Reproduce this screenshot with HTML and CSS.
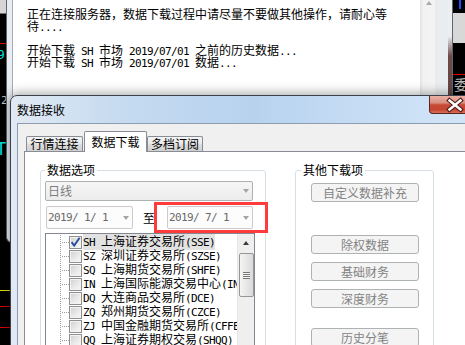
FILE: index.html
```html
<!DOCTYPE html>
<html lang="zh-CN">
<head>
<meta charset="utf-8">
<title>数据接收</title>
<link rel="stylesheet" href="styles.css">
</head>
<body>
<div class="desk">
  <div class="mk cl-box"></div>
  <div class="mk cl-red"></div>
  <div class="mk cl-9">9</div>
  <div class="mk cl-2">2</div>
  <div class="mk cl-t">T</div>
  <div class="mk cl-yel"></div>
  <div class="mk cl-red2"></div>
  <div class="mk cl-red3"></div>
  <div class="mk cr-blue"></div>
  <div class="mk cr-box"></div>
  <div class="mk cr-red"></div>
  <div class="mk cr-wei">委</div>

  <div class="logwin">
    <div class="log-client">
      <div class="log-text">
        <div class="ln">正在连接服务器，数据下载过程中请尽量不要做其他操作，请耐心等</div>
        <div class="ln">待<span class="m">....</span></div>
        <div class="ln"></div>
        <div class="ln">开始下载<span class="m"> SH </span>市场<span class="m"> 2019/07/01 </span>之前的历史数据<span class="m">...</span></div>
        <div class="ln">开始下载<span class="m"> SH </span>市场<span class="m"> 2019/07/01 </span>数据<span class="m">...</span></div>
      </div>
      <div class="vscroll log-scroll">
        <div class="sb-btn"><span class="tri-up light"></span></div>
      </div>
    </div>
  </div>

  <div class="dlg">
    <div class="dlg-title">
      <span class="dlg-caption">数据接收</span>
      <div class="dlg-close">
        <svg width="46" height="16" viewBox="0 0 46 16">
          <path d="M19.5 3.5 L30.5 12.5 M30.5 3.5 L19.5 12.5" stroke="#4a1c18" stroke-width="4.6" stroke-linecap="square" fill="none"/>
          <path d="M19.5 3.5 L30.5 12.5 M30.5 3.5 L19.5 12.5" stroke="#ffffff" stroke-width="2.4" stroke-linecap="square" fill="none"/>
        </svg>
      </div>
    </div>
    <div class="dlg-client">
      <div class="tabs">
        <div class="tab t1">行情连接</div>
        <div class="tab t2 active">数据下载</div>
        <div class="tab t3">多档订阅</div>
      </div>
      <div class="tabpanel">
        <fieldset class="grp grp-data">
          <legend>数据选项</legend>
          <div class="combo disabled"><span>日线</span><span class="arrow"></span></div>
          <div class="daterow">
            <div class="combo date"><span class="m">2019/ 1/ 1</span><span class="arrow"></span></div>
            <span class="to">至</span>
            <div class="combo date date2"><span class="m">2019/ 7/ 1</span><span class="arrow"></span></div>
          </div>
          <div class="tree">
            <div class="tree-items">
              <div class="node"><span class="chk"><svg width="11" height="11" viewBox="0 0 11 11"><path d="M1.6 5.2 L4.2 8.6 L9.6 0.8" fill="none" stroke="#2a4d9e" stroke-width="1.9"/></svg></span><span class="lbl sel"><span class="m">SH </span>上海证券交易所<span class="m">(SSE)</span></span></div>
              <div class="node"><span class="chk"></span><span class="lbl"><span class="m">SZ </span>深圳证券交易所<span class="m">(SZSE)</span></span></div>
              <div class="node"><span class="chk"></span><span class="lbl"><span class="m">SQ </span>上海期货交易所<span class="m">(SHFE)</span></span></div>
              <div class="node"><span class="chk"></span><span class="lbl"><span class="m">IN </span>上海国际能源交易中心<span class="m">(INE)</span></span></div>
              <div class="node"><span class="chk"></span><span class="lbl"><span class="m">DQ </span>大连商品交易所<span class="m">(DCE)</span></span></div>
              <div class="node"><span class="chk"></span><span class="lbl"><span class="m">ZQ </span>郑州期货交易所<span class="m">(CZCE)</span></span></div>
              <div class="node"><span class="chk"></span><span class="lbl"><span class="m">ZJ </span>中国金融期货交易所<span class="m">(CFFEX)</span></span></div>
              <div class="node"><span class="chk"></span><span class="lbl"><span class="m">QQ </span>上海证券期权交易<span class="m">(SHQQ)</span></span></div>
            </div>
            <div class="vscroll tree-scroll">
              <div class="sb-btn"><span class="tri-up"></span></div>
              <div class="thumb"><span class="grip"></span></div>
            </div>
          </div>
        </fieldset>
        <fieldset class="grp grp-other">
          <legend>其他下载项</legend>
          <div class="btns">
            <button class="btn b1" disabled>自定义数据补充</button>
            <button class="btn b2" disabled>除权数据</button>
            <button class="btn b3" disabled>基础财务</button>
            <button class="btn b3" disabled>深度财务</button>
            <button class="btn b5" disabled>历史分笔</button>
          </div>
        </fieldset>
      </div>
    </div>
  </div>

  <div class="callout"></div>
</div>
</body>
</html>
```

FILE: styles.css
```css
* { box-sizing: border-box; }
html, body { margin: 0; padding: 0; }
body {
  width: 465px;
  height: 345px;
  overflow: hidden;
  background: #000;
  font-family: "Noto Sans CJK SC", "Noto Sans", sans-serif;
  font-size: 12px;
  color: #000;
}
.desk {
  position: relative;
  width: 465px;
  height: 345px;
  overflow: hidden;
  background: #000;
}
.m {
  font-family: "DejaVu Sans Mono", monospace;
  font-size: 11px;
  letter-spacing: -0.62px;
}

/* chart marks on the dark background */
.mk { position: absolute; }
.cl-box { left: 0; top: 0; width: 6px; height: 14px; background: #d6d6d6; border-bottom: 1px solid #707070; }
.cl-red { left: 0; top: 43px; width: 6px; height: 1px; background: #e00000; }
.cl-9 { left: -3px; top: 48px; color: #00dede; font: 13px/14px "DejaVu Sans Mono", monospace; }
.cl-2 { left: 1px; top: 95px; color: #c8c8c8; font: 11px/12px "DejaVu Sans Mono", monospace; }
.cl-t { left: -4px; top: 140px; color: #00dede; font: 17px/18px "DejaVu Sans Mono", monospace; }
.cl-yel { left: 0; top: 290px; width: 10px; height: 1px; background: #e6e600; }
.cl-red2 { left: 0; top: 306px; width: 10px; height: 1px; background: #e00000; }
.cl-red3 { left: 0; top: 327px; width: 10px; height: 1px; background: #e00000; }
.cr-blue { left: 459px; top: 0; width: 2px; height: 9px; background: #2a48ff; }
.cr-box { left: 453px; top: 13px; width: 12px; height: 30px; background: #d8d8d8; }
.cr-red { left: 453px; top: 74px; width: 12px; height: 1px; background: #e00000; }
.cr-wei { left: 454px; top: 77px; color: #bdbdbd; font-size: 14px; line-height: 14px; }

/* log window behind */
.logwin {
  position: absolute;
  left: 6px;
  top: -6px;
  width: 447px;
  height: 249px;
  border: 1px solid #5f6670;
  border-top: none;
  border-radius: 0 0 6px 6px;
  background:
    linear-gradient(#eceff2 0, #eceff2 42px, #6d4a48 62px, #3a3030 100%) right top / 4px 100% no-repeat,
    #e9edf1;
  padding: 0 15px 6px 5px;
  display: flex;
}
.log-client {
  flex: 1;
  display: flex;
  background: #fff;
  border-left: 1px solid #a5adb6;
}
.log-text {
  flex: 1;
  padding: 14px 0 0 14px;
  line-height: 12px;
  overflow: hidden;
}
.ln { height: 12px; white-space: pre; }
.vscroll {
  width: 17px;
  display: flex;
  flex-direction: column;
  align-items: center;
}
.log-scroll {
  background: linear-gradient(to right, #e2e2e2 0, #f2f2f2 3px, #f4f4f4 14px, #e8e8e8 100%);
}
.sb-btn {
  width: 100%;
  height: 17px;
  flex: none;
  display: flex;
  align-items: center;
  justify-content: center;
}
.tri-up {
  width: 1px;
  height: 0;
  border-left: 3px solid transparent;
  border-right: 3px solid transparent;
  border-bottom: 4px solid #3c3c3c;
}
.tri-up.light { border-bottom-color: #a9a9a9; }

/* dialog */
.dlg {
  position: absolute;
  left: 10px;
  top: 95px;
  width: 480px;
  height: 270px;
  border: 1px solid #3a414b;
  border-radius: 7px 7px 0 0;
  background: linear-gradient(to right, #e1eaf4 0, #c6dbf0 22%, #b8d2ee 50%, #c9dff5 80%, #d5e7f8 100%);
  box-shadow: 0 0 11px 2px rgba(0, 0, 0, 0.33);
  display: flex;
  flex-direction: column;
  padding-left: 6px;
}
.dlg-title {
  flex: none;
  height: 27px;
  display: flex;
  align-items: center;
}
.dlg-caption { line-height: 12px; }
.dlg-close {
  margin-left: auto;
  margin-right: 12px;
  align-self: flex-start;
  width: 48px;
  height: 18px;
  border: 1px solid #5a2420;
  border-top: none;
  border-radius: 0 0 4px 4px;
  background: linear-gradient(#e9b0a5 0, #d98f80 40%, #c84a38 52%, #c5452f 80%, #d9705a 100%);
  display: flex;
  align-items: center;
}
.dlg-client {
  flex: 1;
  min-height: 0;
  overflow: hidden;
  background: #f0f0f0;
  border-top: 1px solid #8d9cae;
  border-left: 1px solid #8d9cae;
  padding: 7px 0 0 6px;
  display: flex;
  flex-direction: column;
}
.tabs {
  flex: none;
  display: flex;
  align-items: flex-end;
  height: 21px;
  padding-left: 2px;
  position: relative;
  z-index: 1;
  margin-bottom: -1px;
}
.tab {
  height: 15px;
  margin-bottom: 1px;
  border: 1px solid #898c95;
  border-bottom: none;
  border-radius: 2px 2px 0 0;
  background: linear-gradient(#f3f3f3 0, #ebebeb 45%, #dedede 52%, #d0d0d0 100%);
  line-height: 14px;
  text-align: center;
  white-space: nowrap;
}
.t1 { width: 57px; margin-right: 1px; }
.t2 { width: 63px; }
.t3 { width: 56px; }
.tab.active {
  height: 21px;
  margin-bottom: 0;
  background: #fff;
  line-height: 19px;
}
.tabpanel {
  flex: 1;
  min-height: 0;
  background: #fff;
  border-top: 1px solid #898c95;
  border-left: 1px solid #898c95;
  display: flex;
  align-items: flex-start;
  padding: 12px 0 0 15px;
}

/* group boxes */
.grp {
  flex: none;
  margin: 0;
  border: 1px solid #d5dfe5;
  border-radius: 3px;
  min-width: 0;
  height: 240px;
}
.grp legend {
  padding: 0 2px;
  margin: 0;
  font-size: 12px;
  line-height: 12px;
}
.grp-data { width: 226px; padding: 5px 0 0 4px; }
.grp-other { width: 139px; margin-left: 29px; padding: 0 0 0 5px; }

.combo {
  flex: none;
  display: flex;
  align-items: center;
  justify-content: space-between;
  height: 20px;
  border: 1px solid #adb2b5;
  border-radius: 2px;
  padding: 0 3px 0 2px;
  line-height: 12px;
}
.combo.disabled {
  width: 208px;
  background: linear-gradient(#f6f6f6, #ececec);
  color: #7e7e7e;
}
.arrow {
  width: 1px;
  height: 0;
  border-left: 3px solid transparent;
  border-right: 3px solid transparent;
  border-top: 4px solid #a4a4a4;
}
.daterow {
  display: flex;
  align-items: center;
  margin-top: 5px;
  height: 23px;
}
.combo.date {
  width: 87px;
  height: 23px;
  margin-left: 1px;
  padding: 0 3px 0 1px;
  background: #fcfcfc;
  border-color: #cacaca;
  color: #6a6a6a;
}
.to { flex: none; margin-left: 10px; width: 12px; line-height: 12px; }
.combo.date2 { width: 86px; margin-left: 12px; }

/* tree list */
.tree {
  margin-top: 4px;
  width: 210px;
  height: 150px;
  border: 1px solid #828790;
  display: flex;
  background: #fff;
}
.tree-items {
  flex: 1;
  min-width: 0;
  overflow: hidden;
  padding-top: 1px;
}
.node {
  height: 14px;
  display: flex;
  align-items: center;
  padding-left: 23px;
  white-space: nowrap;
  line-height: 14px;
  background:
    repeating-linear-gradient(to bottom, #9a9a9a 0 1px, transparent 1px 2px) 14px 0 / 1px 100% no-repeat,
    repeating-linear-gradient(to right, #9a9a9a 0 1px, transparent 1px 2px) 16px 7px / 8px 1px no-repeat;
}
.chk {
  flex: none;
  width: 13px;
  height: 13px;
  border: 1px solid #8f8f8f;
  background: linear-gradient(135deg, #cfcfcf 0, #e9e9e9 55%, #f7f7f7 100%);
  box-shadow: inset 0 0 0 1px #f3f3f3;
  display: flex;
  align-items: center;
  justify-content: center;
}
.lbl { flex: none; margin-left: 1px; }
.lbl.sel { background: #e2e2e2; }
.tree-scroll {
  flex: none;
  background: #efefef;
  border-left: 1px solid #e4e4e4;
}
.thumb {
  flex: none;
  margin-top: 2px;
  width: 15px;
  height: 44px;
  border: 1px solid #979797;
  border-radius: 2px;
  background: linear-gradient(to right, #f5f5f5, #e7e7e7 50%, #d9d9d9);
  display: flex;
  align-items: center;
  justify-content: center;
}
.grip {
  width: 7px;
  height: 7px;
  background: repeating-linear-gradient(to bottom, #777 0 1px, #f4f4f4 1px 2px);
}

/* buttons */
.btns {
  display: flex;
  flex-direction: column;
  padding-left: 10px;
}
.btn {
  flex: none;
  width: 108px;
  height: 19px;
  padding: 0;
  border: 1px solid #adb2b5;
  border-radius: 3px;
  background: #f4f4f4;
  color: #838383;
  font-family: "Noto Sans CJK SC", sans-serif;
  font-size: 12px;
  line-height: 17px;
  text-align: center;
}
.b1 { margin-top: 7px; }
.b2 { margin-top: 33px; }
.b3 { margin-top: 8px; }
.b5 { margin-top: 20px; }

/* annotation */
.callout {
  position: absolute;
  left: 154px;
  top: 202px;
  width: 114px;
  height: 31px;
  border: 3px solid #ff3b3b;
}
```
